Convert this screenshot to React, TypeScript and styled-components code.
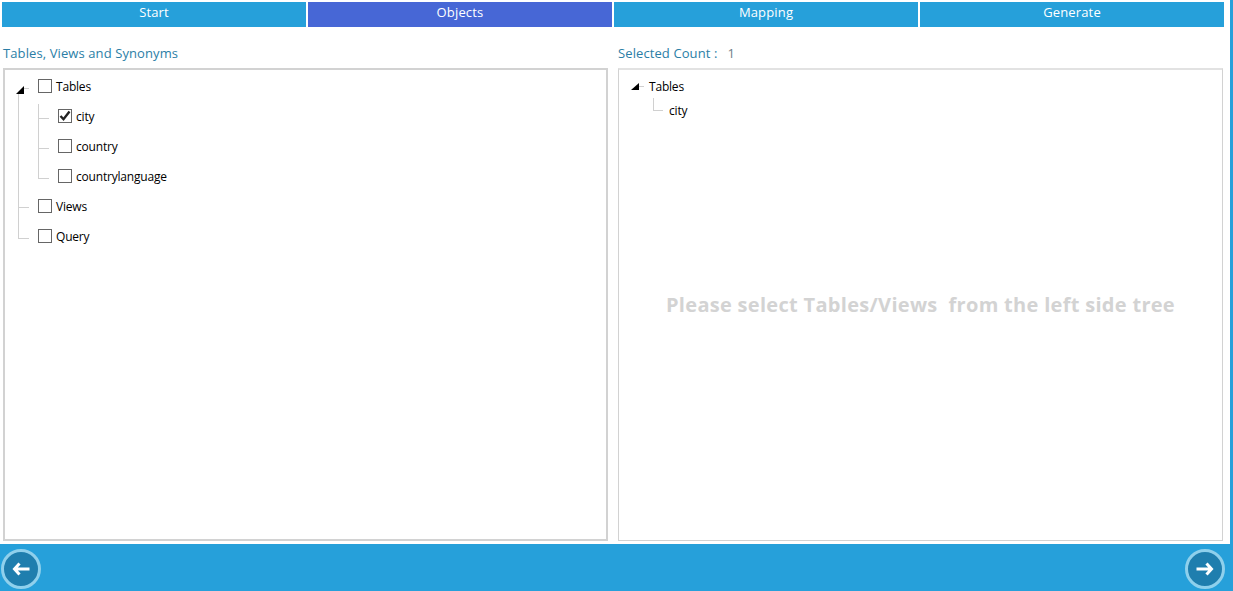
import React from "react";
import styled, { createGlobalStyle } from "styled-components";

const Global = createGlobalStyle`
  html, body { margin: 0; padding: 0; background: #fff; }
  body { font-family: "Open Sans", "Noto Sans", sans-serif; }
`;

const Page = styled.div`
  width: 1233px;
  height: 591px;
  display: flex;
  flex-direction: column;
  overflow: hidden;
  background: #fff;
`;

const Upper = styled.div`
  flex: 1;
  min-height: 0;
  display: flex;
  flex-direction: column;
  border-right: 3px solid #26a0da;
  padding: 2px 6px 3px 2px;
`;

const Tabs = styled.div`
  display: grid;
  grid-template-columns: repeat(4, 304px);
  gap: 2px;
  height: 25px;
`;

const Tab = styled.div<{ $active?: boolean }>`
  background: ${(p) => (p.$active ? "#4767d6" : "#26a0da")};
  color: #fff;
  font-size: 13px;
  letter-spacing: 0.15px;
  line-height: 21px;
  text-align: center;
`;

const Columns = styled.div`
  flex: 1;
  min-height: 0;
  display: grid;
  grid-template-columns: 605px 605px;
  gap: 10px;
  padding: 16px 0 0 1px;
`;

const Column = styled.div`
  display: flex;
  flex-direction: column;
  min-height: 0;
`;

const Heading = styled.div`
  height: 25px;
  font-size: 13px;
  letter-spacing: 0.1px;
  line-height: 20px;
  color: #2b7ea6;
  white-space: pre;
`;

const Count = styled.span`
  color: #708088;
  margin-left: 10px;
`;

const Panel = styled.div<{ $thick?: boolean }>`
  position: relative;
  flex: 1;
  box-sizing: border-box;
  border: ${(p) => (p.$thick ? "2px solid #d2d2d2" : "1px solid #d2d2d2")};
  border-top: 2px solid ${(p) => (p.$thick ? "#d2d2d2" : "#e2e2e2")};
  display: flex;
  flex-direction: column;
`;

const LeftTree = styled.div`
  padding-top: 2px;
  display: flex;
  flex-direction: column;
`;

const RightTree = styled.div`
  display: flex;
  flex-direction: column;
  gap: 6px;
  padding: 8px 0 0 30px;
`;

const Lines = styled.svg`
  position: absolute;
  left: 0;
  top: 0;
  pointer-events: none;
`;

const Row = styled.div<{ $level: number }>`
  height: 30px;
  display: flex;
  align-items: center;
  gap: 4px;
  padding-left: ${(p) => 33 + p.$level * 20}px;
`;

const Box = styled.span`
  box-sizing: border-box;
  width: 14px;
  height: 14px;
  margin-top: -3px;
  border: 1px solid #666;
  background: #fff;
  display: flex;
  align-items: center;
  justify-content: center;
`;

const Label = styled.span`
  font-size: 12px;
  line-height: 16px;
  color: #000;
  letter-spacing: -0.2px;
`;

const PlainRow = styled.div<{ $level: number }>`
  height: 18px;
  display: flex;
  align-items: center;
  padding-left: ${(p) => p.$level * 20}px;
`;

const Placeholder = styled.div`
  position: absolute;
  left: 0;
  right: 0;
  top: 221px;
  text-align: center;
  font-size: 20px;
  letter-spacing: 0.3px;
  line-height: 28px;
  font-weight: 700;
  color: #d3d3d3;
  white-space: pre;
`;

const Footer = styled.div`
  height: 47px;
  flex: none;
  background: #26a0da;
  display: flex;
  align-items: center;
  justify-content: space-between;
  padding: 3px 8px 0 1px;
  box-sizing: border-box;
`;

const NavButton = styled.button`
  box-sizing: border-box;
  width: 40px;
  height: 40px;
  padding: 0;
  border-radius: 50%;
  border: 3px solid #8fd0ec;
  background: #1f7eae;
  display: flex;
  align-items: center;
  justify-content: center;
`;

const Check = () => (
  <svg width="12" height="12" viewBox="0 0 12 12">
    <path d="M1.5 6 L4.5 9.2 L10.5 1.6" fill="none" stroke="#222" strokeWidth="2.4" />
  </svg>
);

const Arrow = ({ dir }: { dir: "left" | "right" }) => (
  <svg width="18" height="14" viewBox="0 0 18 14" style={dir === "right" ? { transform: "scaleX(-1)" } : undefined}>
    <path d="M7.5 1.5 L2.5 7 L7.5 12.5 M3 7 H17.5" fill="none" stroke="#fff" strokeWidth="3" />
  </svg>
);

const Item = ({ level, label, checked }: { level: number; label: string; checked?: boolean }) => (
  <Row $level={level}>
    <Box>{checked && <Check />}</Box>
    <Label>{label}</Label>
  </Row>
);

export default function App() {
  return (
    <Page>
      <Global />
      <Upper>
        <Tabs>
          <Tab>Start</Tab>
          <Tab $active>Objects</Tab>
          <Tab>Mapping</Tab>
          <Tab>Generate</Tab>
        </Tabs>
        <Columns>
          <Column>
            <Heading>Tables, Views and Synonyms</Heading>
            <Panel $thick>
              <Lines width="80" height="190">
                <g stroke="#d0d0d0" strokeWidth="1" shapeRendering="crispEdges" fill="none">
                  <path d="M13.5 24 V168.5 H24 M14 137.5 H24 M19 18.5 H24" />
                  <path d="M33.5 34 V108.5 H44 M34 48.5 H44 M34 78.5 H44" />
                </g>
                <path d="M11 24 H19 V16 Z" fill="#000" />
              </Lines>
              <LeftTree>
                <Item level={0} label="Tables" />
                <Item level={1} label="city" checked />
                <Item level={1} label="country" />
                <Item level={1} label="countrylanguage" />
                <Item level={0} label="Views" />
                <Item level={0} label="Query" />
              </LeftTree>
            </Panel>
          </Column>
          <Column>
            <Heading>
              Selected Count :<Count>1</Count>
            </Heading>
            <Panel>
              <Lines width="60" height="60">
                <g stroke="#d0d0d0" strokeWidth="1" shapeRendering="crispEdges" fill="none">
                  <path d="M20 16.5 H25 M34.5 28 V40.5 H44" />
                </g>
                <path d="M12 20 H20 V13 Z" fill="#000" />
              </Lines>
              <RightTree>
                <PlainRow $level={0}>
                  <Label>Tables</Label>
                </PlainRow>
                <PlainRow $level={1}>
                  <Label>city</Label>
                </PlainRow>
              </RightTree>
              <Placeholder>Please select Tables/Views  from the left side tree</Placeholder>
            </Panel>
          </Column>
        </Columns>
      </Upper>
      <Footer>
        <NavButton aria-label="Back">
          <Arrow dir="left" />
        </NavButton>
        <NavButton aria-label="Next">
          <Arrow dir="right" />
        </NavButton>
      </Footer>
    </Page>
  );
}
